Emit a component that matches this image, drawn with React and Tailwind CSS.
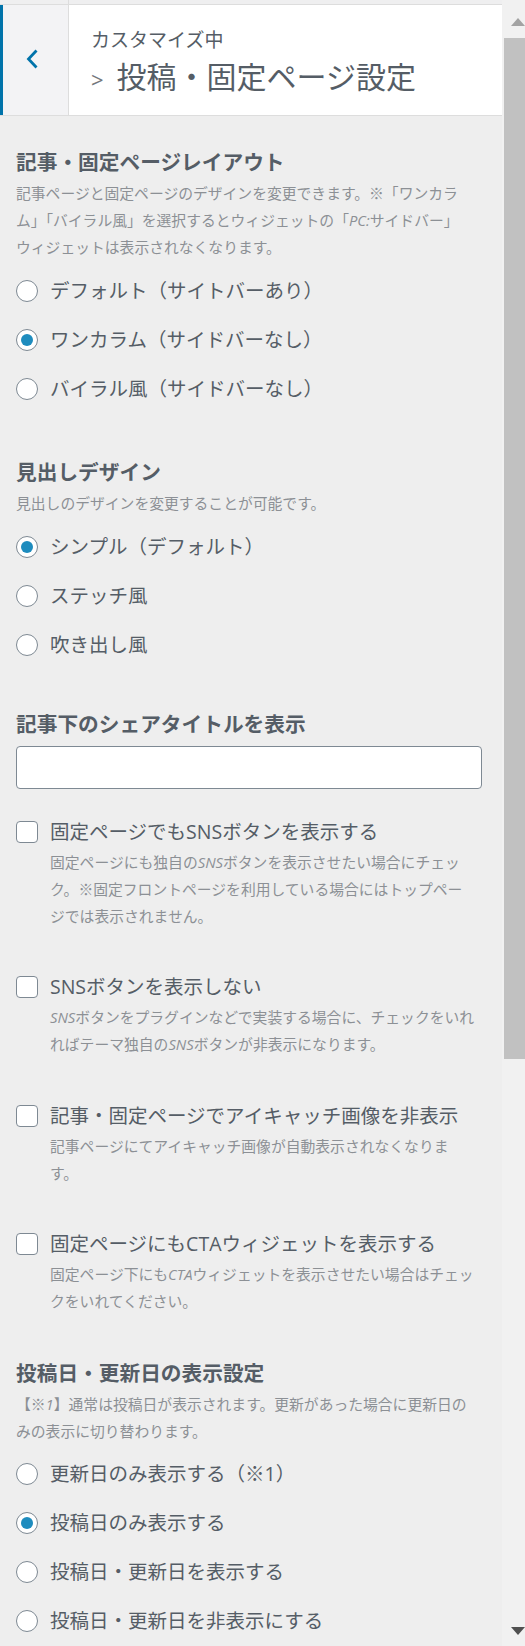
import React from "react";

const Radio = ({ label, checked }) => (
  <div className="flex items-center h-[49px] gap-[12px]">
    <span className="w-[22px] h-[22px] rounded-full border border-[#7e8993] bg-white flex items-center justify-center shrink-0">
      {checked && <span className="w-[12px] h-[12px] rounded-full bg-[#1e8cbe]" />}
    </span>
    <span className="text-[19.5px] leading-[28px] text-[#555d66] whitespace-nowrap">{label}</span>
  </div>
);

const Check = ({ label, desc, className = "" }) => (
  <div className={className}>
    <div className="flex items-center h-[28px] gap-[12px]">
      <span className="w-[22px] h-[22px] rounded-[4px] border border-[#7e8993] bg-white shrink-0" />
      <span className="text-[19.5px] leading-[28px] text-[#555d66] whitespace-nowrap">{label}</span>
    </div>
    <p className="mt-[3px] pl-[34px] text-[14.8px] leading-[27px] text-[#8c9095] whitespace-nowrap">{desc}</p>
  </div>
);

const Heading = ({ children, className = "" }) => (
  <h3 className={`text-[20.7px] leading-[28px] font-bold text-[#555d66] ${className}`}>{children}</h3>
);

const Desc = ({ children }) => (
  <p className="mt-[4px] text-[14.8px] leading-[27px] text-[#8c9095] whitespace-nowrap">{children}</p>
);

export default function App() {
  return (
    <div className="flex w-[525px] h-[1646px] overflow-hidden bg-[#eeeeee] font-[family-name:'Open_Sans','Noto_Sans_CJK_JP',sans-serif]">
      <div className="w-[502px] shrink-0 flex flex-col">
        {/* top strip */}
        <div className="h-[5px] bg-[#efeff0] border-b border-[#dddddd] flex">
          <div className="w-[69px] border-r border-[#dddddd]" />
        </div>

        {/* header */}
        <div className="h-[111px] bg-white border-b border-[#dddddd] flex">
          <div className="w-[69px] h-full bg-[#f3f3f5] border-l-[3px] border-[#0073aa] border-r border-r-[#dddddd] pl-[23px]">
            <svg className="mt-[44px]" width="12" height="20" viewBox="0 0 12 20">
              <polyline points="10.5,1.5 2.5,10 10.5,18.5" fill="none" stroke="#0073aa" strokeWidth="2.8" />
            </svg>
          </div>
          <div className="pl-[22px] pt-[23px]">
            <div className="text-[19px] leading-[24px] text-[#555d66]">カスタマイズ中</div>
            <div className="mt-[7px] flex items-baseline leading-[36px]">
              <span className="text-[22px] text-[#72777c]">&gt;</span>
              <span className="ml-[13px] text-[30px] text-[#555d66]">投稿・固定ページ設定</span>
            </div>
          </div>
        </div>

        {/* controls */}
        <div className="pl-[16px] pr-[20px] pt-[32px]">
          <Heading>記事・固定ページレイアウト</Heading>
          <Desc>
            記事ページと固定ページのデザインを変更できます。※「ワンカラ<br />
            ム」「バイラル風」を選択するとウィジェットの「<i>PC:</i>サイドバー」<br />
            ウィジェットは表示されなくなります。
          </Desc>
          <div className="mt-[5px]">
            <Radio label="デフォルト（サイトバーあり）" />
            <Radio label="ワンカラム（サイドバーなし）" checked />
            <Radio label="バイラル風（サイドバーなし）" />
          </div>

          <Heading className="mt-[45px]">見出しデザイン</Heading>
          <Desc>見出しのデザインを変更することが可能です。</Desc>
          <div className="mt-[5px]">
            <Radio label="シンプル（デフォルト）" checked />
            <Radio label="ステッチ風" />
            <Radio label="吹き出し風" />
          </div>

          <Heading className="mt-[41px]">記事下のシェアタイトルを表示</Heading>
          <input
            type="text"
            className="mt-[8px] block w-full h-[43px] rounded-[4px] border border-[#7e8993] bg-white outline-none"
          />

          <Check
            className="mt-[29px]"
            label="固定ページでもSNSボタンを表示する"
            desc={
              <>
                固定ページにも独自の<i>SNS</i>ボタンを表示させたい場合にチェッ<br />
                ク。※固定フロントページを利用している場合にはトップペー<br />
                ジでは表示されません。
              </>
            }
          />
          <Check
            className="mt-[43px]"
            label="SNSボタンを表示しない"
            desc={
              <>
                <i>SNS</i>ボタンをプラグインなどで実装する場合に、チェックをいれ<br />
                ればテーマ独自の<i>SNS</i>ボタンが非表示になります。
              </>
            }
          />
          <Check
            className="mt-[44px]"
            label="記事・固定ページでアイキャッチ画像を非表示"
            desc={
              <>
                記事ページにてアイキャッチ画像が自動表示されなくなりま<br />
                す。
              </>
            }
          />
          <Check
            className="mt-[43px]"
            label="固定ページにもCTAウィジェットを表示する"
            desc={
              <>
                固定ページ下にも<i>CTA</i>ウィジェットを表示させたい場合はチェッ<br />
                クをいれてください。
              </>
            }
          />

          <Heading className="mt-[44px]">投稿日・更新日の表示設定</Heading>
          <Desc>
            【※<i>1</i>】通常は投稿日が表示されます。更新があった場合に更新日の<br />
            みの表示に切り替わります。
          </Desc>
          <div className="mt-[4px]">
            <Radio label="更新日のみ表示する（※1）" />
            <Radio label="投稿日のみ表示する" checked />
            <Radio label="投稿日・更新日を表示する" />
            <Radio label="投稿日・更新日を非表示にする" />
          </div>
        </div>
      </div>

      {/* scrollbar */}
      <div className="w-[23px] shrink-0 h-full bg-[#f1f1f1] flex flex-col">
        <div className="h-[38px] pt-[18px] pl-[9px]">
          <svg width="14" height="8" viewBox="0 0 14 8">
            <polygon points="7,0 14,8 0,8" fill="#a3a3a3" />
          </svg>
        </div>
        <div className="ml-[2px] w-[21px] h-[1021px] bg-[#c1c1c1]" />
        <div className="flex-1" />
        <div className="h-[19px] pl-[9px]">
          <svg width="14" height="8" viewBox="0 0 14 8">
            <polygon points="0,0 14,0 7,8" fill="#505050" />
          </svg>
        </div>
      </div>
    </div>
  );
}
